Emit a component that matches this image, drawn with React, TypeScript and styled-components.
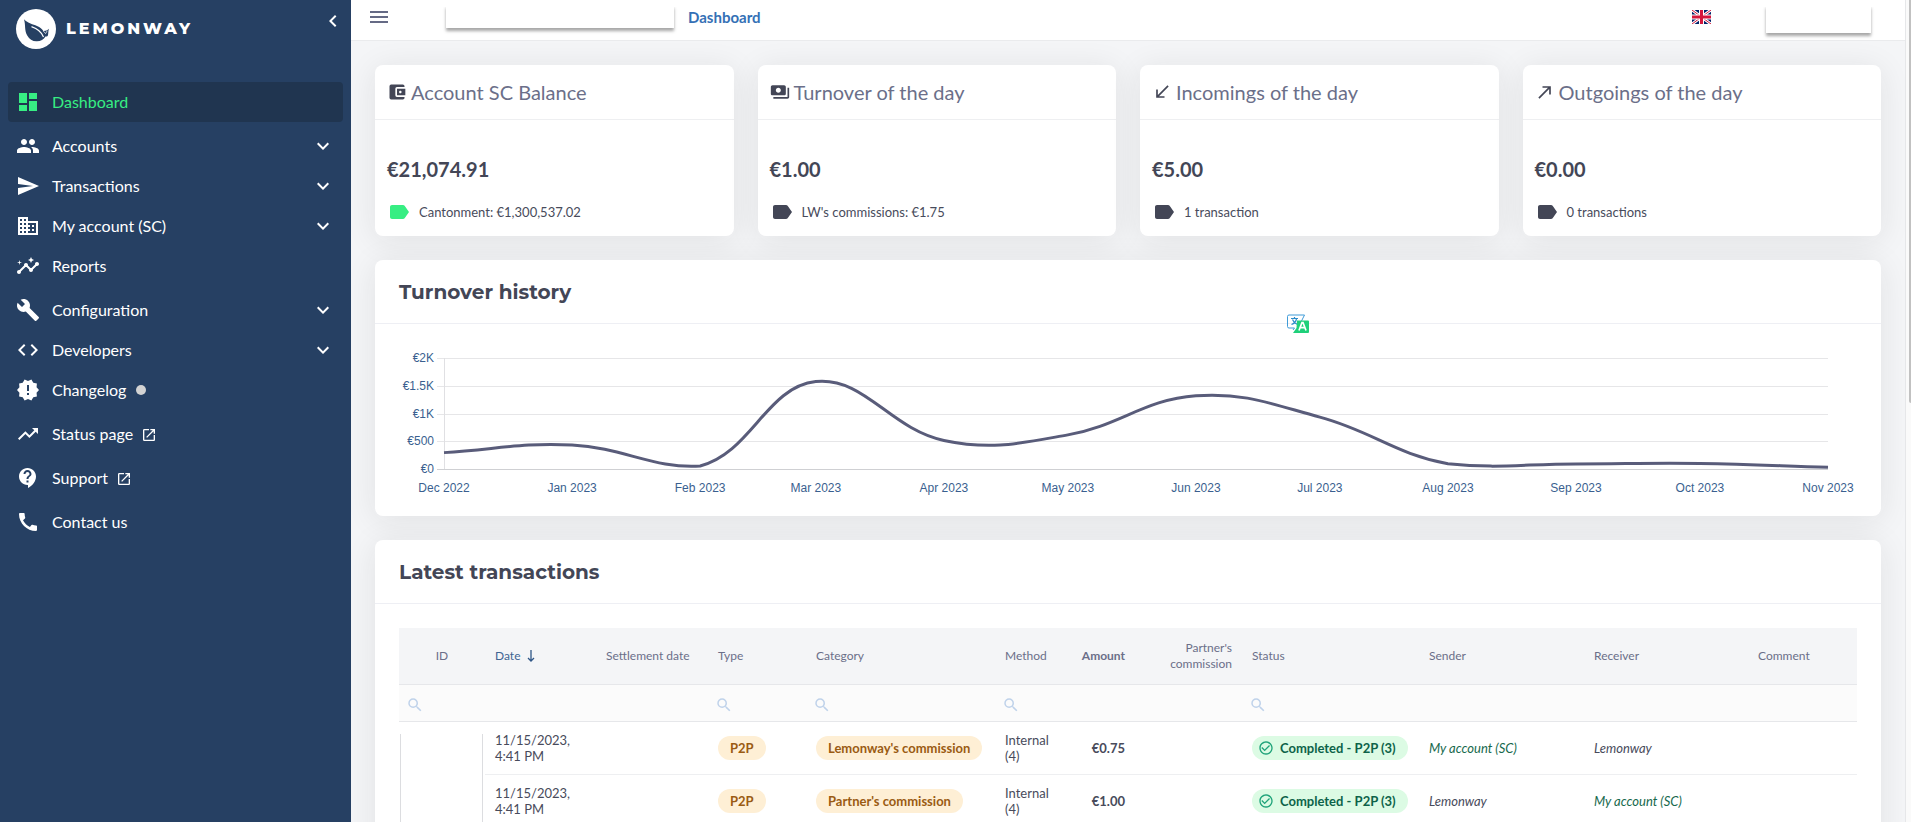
import React, { useEffect, useRef, useState } from 'react';
import styled, { createGlobalStyle } from 'styled-components';
import type { IconType } from 'react-icons';
import {
  MdAccountBalanceWallet,
  MdBuild,
  MdBusiness,
  MdCall,
  MdCallMade,
  MdCallReceived,
  MdCheckCircleOutline,
  MdChevronLeft,
  MdCode,
  MdContactSupport,
  MdDashboard,
  MdExpandMore,
  MdInsights,
  MdLabel,
  MdMenu,
  MdNewReleases,
  MdOpenInNew,
  MdPayments,
  MdPeople,
  MdSearch,
  MdSend,
  MdTrendingUp,
} from 'react-icons/md';

const GlobalStyle = createGlobalStyle`
  *, *::before, *::after { box-sizing: border-box; }
  body {
    margin: 0;
    font-family: Lato, "Liberation Sans", sans-serif;
    font-size: 14px;
    color: #484b5b;
    background: #f4f5f7;
  }
  h1, h2, p, ul { margin: 0; padding: 0; }
  button { font: inherit; color: inherit; background: none; border: 0; padding: 0; cursor: pointer; }
  a { color: inherit; text-decoration: none; }
  svg { display: block; flex: none; }
`;

const Shell = styled.div`
  display: flex;
  height: 100vh;
  overflow: hidden;
`;

/* ---------- Sidebar ---------- */

const Sidebar = styled.aside`
  flex: none;
  width: 351px;
  background: #264063;
  color: #fff;
`;

const Brand = styled.div`
  display: flex;
  align-items: flex-start;
  justify-content: space-between;
  height: 82px;
  padding: 9px 6px 0 16px;
`;

const BrandLink = styled.a`
  display: flex;
  align-items: center;
  gap: 10px;
`;

const Wordmark = styled.span`
  font: 800 16px/40px Montserrat, Inter, sans-serif;
  letter-spacing: 3px;
`;

const Nav = styled.nav`
  display: flex;
  flex-direction: column;
  gap: 4px;
  padding: 0 8px;
`;

const NavGroup = styled.ul`
  list-style: none;
`;

const NavLink = styled.a<{ $active?: boolean }>`
  display: flex;
  align-items: center;
  height: 40px;
  padding: 0 8px;
  border-radius: 4px;
  font-size: 16px;
  color: ${({ $active }) => ($active ? '#37ee83' : '#fff')};
  background: ${({ $active }) => ($active ? '#203550' : 'transparent')};
`;

const NavLabel = styled.span`
  margin: 0 0 2px 12px;
`;

const ExternalMark = styled.span`
  margin: 2px 0 0 8px;
`;

const Dot = styled.span`
  width: 10px;
  height: 10px;
  margin-left: 10px;
  border-radius: 50%;
  background: #d3d3d3;
`;

const Chevron = styled.span`
  margin-left: auto;
`;

type NavItem = {
  label: string;
  icon: IconType;
  active?: boolean;
  children?: boolean;
  external?: boolean;
  dot?: boolean;
};

const navGroups: NavItem[][] = [
  [{ label: 'Dashboard', icon: MdDashboard, active: true }],
  [
    { label: 'Accounts', icon: MdPeople, children: true },
    { label: 'Transactions', icon: MdSend, children: true },
    { label: 'My account (SC)', icon: MdBusiness, children: true },
    { label: 'Reports', icon: MdInsights },
  ],
  [
    { label: 'Configuration', icon: MdBuild, children: true },
    { label: 'Developers', icon: MdCode, children: true },
    { label: 'Changelog', icon: MdNewReleases, dot: true },
  ],
  [{ label: 'Status page', icon: MdTrendingUp, external: true }],
  [{ label: 'Support', icon: MdContactSupport, external: true }],
  [{ label: 'Contact us', icon: MdCall }],
];

const LeafLogo = () => (
  <svg width="40" height="40" viewBox="0 0 40 40" aria-hidden="true">
    <circle cx="20" cy="20" r="20" fill="#fff" />
    <path
      d="M8 10.300C12 14.500 17 15.200 21 17c3.200 1.300 5 2.800 6.300 4.900 2 .2 4-.6 5.700-2.200-1 2.300-.4 4.800-1.300 7.300-1 .6-1.600.7-2.300.5-1.600 3.200-5 5-9 4.800-4-.2-7.200-2-9-5.600C8.200 21.600 9.800 16 8 10.300z"
      fill="#264063"
    />
    <path d="M15.500 17.600c5.200 1.800 9.800 4.600 12 10.400" fill="none" stroke="#fff" strokeWidth="1.200" />
    <path d="M27.300 22l2.300 2.600 1.600-2.800" fill="none" stroke="#fff" strokeWidth=".7" />
  </svg>
);

/* ---------- Top bar ---------- */

const Page = styled.div`
  flex: 1;
  min-width: 0;
  display: flex;
  flex-direction: column;
`;

const TopBar = styled.header`
  flex: none;
  display: flex;
  align-items: flex-start;
  height: 41px;
  padding: 5px 34px 0 16px;
  background: #fff;
  border-bottom: 1px solid #eaebed;
`;

const MenuButton = styled.button`
  color: #656a85;
`;

const BlankPlate = styled.div<{ $width: number; $height: number }>`
  width: ${({ $width }) => $width}px;
  height: ${({ $height }) => $height}px;
  background: #fff;
  box-shadow: 0 3px 3px rgba(0, 0, 0, 0.35);
  clip-path: inset(2px -6px -8px -6px);
`;

const Crumbs = styled.nav`
  display: flex;
  flex: 1;
  margin-left: 55px;
`;

const Crumb = styled.a`
  margin-left: 14px;
  font-weight: 700;
  font-size: 15px;
  line-height: 24px;
  color: #3470b5;
`;

const LanguageButton = styled.button`
  margin: 5px 55px 0 0;
`;

const Flag = () => (
  <svg width="19" height="14" viewBox="0 0 19 14" aria-hidden="true">
    <rect width="19" height="14" fill="#012169" />
    <path d="M0 0l19 14M19 0L0 14" stroke="#fff" strokeWidth="3" />
    <path d="M0 0l19 14M19 0L0 14" stroke="#d4163c" strokeWidth="1" />
    <path d="M9.500 0v14M0 7h19" stroke="#fff" strokeWidth="5" />
    <path d="M9.500 0v14M0 7h19" stroke="#d4163c" strokeWidth="3" />
  </svg>
);

/* ---------- Content ---------- */

const Body = styled.div`
  flex: 1;
  min-height: 0;
  overflow: hidden;
`;

const Content = styled.main`
  display: flex;
  flex-direction: column;
  gap: 24px;
  padding: 24px;
`;

const ScrollTrack = styled.div`
  flex: none;
  width: 6px;
  padding-left: 3px;
  background: #fafafa;
  border-left: 1px solid #e6e7e9;
`;

const ScrollThumb = styled.div`
  height: 49%;
  background: #c1c1c1;
  border-radius: 0 0 0 2px;
`;

const StatRow = styled.section`
  display: grid;
  grid-template-columns: repeat(4, 1fr);
  gap: 24px;
`;

const Card = styled.section`
  background: #fff;
  border-radius: 8px;
  box-shadow: 0 4px 32px rgba(30, 32, 38, 0.09);
`;

const StatHead = styled.header`
  display: flex;
  align-items: center;
  gap: 4px;
  height: 55px;
  padding: 0 12px;
  border-bottom: 1px solid #eeeff1;
  color: #434656;
`;

const StatTitle = styled.h2`
  font-size: 20px;
  font-weight: 400;
  color: #6b6f89;
`;

const StatBody = styled.div`
  padding: 34px 12px 12px;
`;

const StatValue = styled.p`
  font-size: 20px;
  line-height: 30px;
  font-weight: 700;
  color: #434656;
`;

const StatNote = styled.p<{ $accent?: boolean }>`
  display: flex;
  align-items: center;
  gap: 8px;
  height: 24px;
  margin-top: 16px;
  font-size: 13px;
  color: #484b5b;

  svg {
    color: ${({ $accent }) => ($accent ? '#37ee83' : '#434656')};
  }
`;

const stats = [
  { title: 'Account SC Balance', icon: MdAccountBalanceWallet, value: '€21,074.91', note: 'Cantonment: €1,300,537.02', accent: true },
  { title: 'Turnover of the day', icon: MdPayments, value: '€1.00', note: "LW's commissions: €1.75" },
  { title: 'Incomings of the day', icon: MdCallReceived, value: '€5.00', note: '1 transaction' },
  { title: 'Outgoings of the day', icon: MdCallMade, value: '€0.00', note: '0 transactions' },
];

const PanelHead = styled.header`
  position: relative;
  display: flex;
  align-items: center;
  height: 64px;
  padding: 0 24px;
  border-bottom: 1px solid #eeeff4;
`;

const PanelTitle = styled.h2`
  font: 700 20px/30px Montserrat, Inter, sans-serif;
  color: #434656;
`;

const TranslateButton = styled.button`
  position: absolute;
  left: 912px;
  bottom: -10px;
`;

const TranslateIcon = () => (
  <svg width="22" height="19" viewBox="0 0 22 19" aria-hidden="true">
    <path d="M17.500 1H2a1.500 1.500 0 0 0-1.500 1.500v10A1.500 1.500 0 0 0 2 14h5.500l-1.500 2" fill="none" stroke="#3f9bd8" />
    <path d="M17.500 1l-3 6" stroke="#3f9bd8" />
    <path d="M4 4.500h7M7.500 3v1.500M9.500 5c-.6 2.500-2.500 4.500-5 5.500M5.500 5.500c.8 2 2.300 3.800 4.500 4.800" fill="none" stroke="#2b8bc9" strokeWidth="1.200" />
    <path d="M10 6.500h11a1 1 0 0 1 1 1V18a1 1 0 0 1-1 1H6l3.500-5z" fill="#1fd07a" />
    <path d="M12 16.500l3-8h1l3 8M13.300 13.600h4.400" fill="none" stroke="#fff" strokeWidth="1.700" />
  </svg>
);

/* ---------- Turnover chart ---------- */

const ChartBox = styled.div`
  padding: 24px 24px 16px;
`;

const AxisText = styled.text`
  font-family: "Liberation Sans", Arial, sans-serif;
  font-size: 12px;
  fill: #3a5f8f;
`;

const series = [
  { month: 'Dec 2022', day: 0, amount: 295 },
  { month: 'Jan 2023', day: 31, amount: 432 },
  { month: 'Feb 2023', day: 62, amount: 55 },
  { month: 'Mar 2023', day: 90, amount: 1575 },
  { month: 'Apr 2023', day: 121, amount: 515 },
  { month: 'May 2023', day: 151, amount: 615 },
  { month: 'Jun 2023', day: 182, amount: 1320 },
  { month: 'Jul 2023', day: 212, amount: 935 },
  { month: 'Aug 2023', day: 243, amount: 95 },
  { month: 'Sep 2023', day: 274, amount: 92 },
  { month: 'Oct 2023', day: 304, amount: 100 },
  { month: 'Nov 2023', day: 335, amount: 30 },
];

const ticks = [
  { label: '€2K', amount: 2000 },
  { label: '€1.5K', amount: 1500 },
  { label: '€1K', amount: 1000 },
  { label: '€500', amount: 500 },
  { label: '€0', amount: 0 },
];

type Point = { x: number; y: number };

/* Cubic spline whose handles follow the direction between neighbouring points
   and never reach below the zero line. */
function splinePath(points: Point[], tension: number, floor: number) {
  const handles = points.map((p, i) => {
    const prev = points[i - 1] ?? p;
    const next = points[i + 1] ?? p;
    const before = Math.hypot(p.x - prev.x, p.y - prev.y);
    const after = Math.hypot(next.x - p.x, next.y - p.y);
    const a = (tension * before) / (before + after);
    const b = (tension * after) / (before + after);
    return {
      inX: p.x - a * (next.x - prev.x),
      inY: Math.min(floor, p.y - a * (next.y - prev.y)),
      outX: p.x + b * (next.x - prev.x),
      outY: Math.min(floor, p.y + b * (next.y - prev.y)),
    };
  });
  return points
    .map((p, i) =>
      i === 0
        ? `M${p.x} ${p.y}`
        : `C${handles[i - 1].outX} ${handles[i - 1].outY} ${handles[i].inX} ${handles[i].inY} ${p.x} ${p.y}`,
    )
    .join('');
}

function TurnoverChart() {
  const box = useRef<HTMLDivElement>(null);
  const [width, setWidth] = useState(1458);

  useEffect(() => {
    const node = box.current;
    if (!node) return;
    const observer = new ResizeObserver(([entry]) => setWidth(entry.contentRect.width));
    observer.observe(node);
    return () => observer.disconnect();
  }, []);

  const left = 45;
  const right = width - 29;
  const top = 10;
  const bottom = 121;
  const xOf = (day: number) => left + (day / 335) * (right - left);
  const yOf = (amount: number) => bottom - (amount / 2000) * (bottom - top);
  const points = series.map((s) => ({ x: xOf(s.day), y: yOf(s.amount) }));

  return (
    <ChartBox>
      <div ref={box}>
        <svg width="100%" height="152" role="img" aria-label="Turnover history by month">
          {ticks.map((t) => {
            const y = Math.round(yOf(t.amount)) + 0.5;
            return (
              <g key={t.label}>
                <line x1={left - 7} x2={right} y1={y} y2={y} stroke={t.amount ? '#e6e6e8' : '#cfd0d3'} />
                <AxisText x={left - 10} y={y + 3} textAnchor="end">{t.label}</AxisText>
              </g>
            );
          })}
          <line x1={left + 0.5} x2={left + 0.5} y1={top} y2={bottom} stroke="#e0e0e3" />
          {series.map((s) => (
            <AxisText key={s.month} x={xOf(s.day)} y={144} textAnchor="middle">{s.month}</AxisText>
          ))}
          <path d={splinePath(points, 0.4, bottom)} fill="none" stroke="#595c7a" strokeWidth="3" />
        </svg>
      </div>
    </ChartBox>
  );
}

/* ---------- Transactions table ---------- */

const TableWrap = styled.div`
  padding: 24px;
`;

const Table = styled.table`
  width: 100%;
  table-layout: fixed;
  border-collapse: separate;
  border-spacing: 0;
`;

const HeadCell = styled.th<{ $align?: string; $bold?: boolean; $sorted?: boolean }>`
  height: 57px;
  padding: 0 10px;
  background: #f4f5f7;
  border-bottom: 1px solid #e6e7ea;
  font-size: 12px;
  line-height: 16px;
  font-weight: ${({ $bold }) => ($bold ? 700 : 400)};
  text-align: ${({ $align }) => $align ?? 'left'};
  color: ${({ $sorted }) => ($sorted ? '#3f6593' : '#6b6f89')};
`;

const SortButton = styled.button`
  display: inline-flex;
  align-items: center;
  gap: 7px;
`;

const FilterCell = styled.td`
  height: 37px;
  padding: 4px 7px 0;
  background: #fbfbfb;
  border-bottom: 1px solid #e6e7ea;
`;

const FilterLabel = styled.label`
  display: flex;
  align-items: center;
  color: #bfd2ea;
`;

const FilterInput = styled.input`
  min-width: 0;
  width: 100%;
  border: 0;
  outline: 0;
  background: transparent;
  font: inherit;
`;

const Cell = styled.td<{ $align?: string; $bold?: boolean }>`
  height: 53px;
  padding: 0 10px;
  border-bottom: 1px solid #eeeff1;
  font-size: 13px;
  line-height: 16px;
  font-weight: ${({ $bold }) => ($bold ? 700 : 400)};
  text-align: ${({ $align }) => $align ?? 'left'};
  color: #484b5b;
`;

const IdCell = styled.td`
  height: 106px;
  padding: 12px 2px 0 1px;
`;

const IdPlate = styled.div`
  height: 94px;
  border: 1px solid #dcdde0;
  border-width: 0 1px;
  background: #fff;
`;

const Party = styled.em<{ $own?: boolean }>`
  color: ${({ $own }) => ($own ? '#17694d' : '#484b5b')};
`;

const Pill = styled.span<{ $tone: 'amber' | 'green' }>`
  display: inline-flex;
  align-items: center;
  gap: 6px;
  height: 24px;
  padding: ${({ $tone }) => ($tone === 'amber' ? '0 12px' : '0 12px 0 6px')};
  border-radius: 12px;
  font-weight: 700;
  font-size: 13px;
  white-space: nowrap;
  vertical-align: middle;
  color: ${({ $tone }) => ($tone === 'amber' ? '#9a5b13' : '#0d6349')};
  background: ${({ $tone }) => ($tone === 'amber' ? '#feefd5' : '#dcfbe4')};

  svg {
    color: #1fa37a;
  }
`;

type Column = {
  label: string;
  width: number;
  align?: string;
  bold?: boolean;
  sorted?: boolean;
  filter?: boolean;
};

const columns: Column[] = [
  { label: 'ID', width: 86, align: 'center', filter: true },
  { label: 'Date', width: 111, sorted: true },
  { label: 'Settlement date', width: 112 },
  { label: 'Type', width: 98, filter: true },
  { label: 'Category', width: 189, filter: true },
  { label: 'Method', width: 75, filter: true },
  { label: 'Amount', width: 65, align: 'right', bold: true },
  { label: "Partner's commission", width: 107, align: 'right' },
  { label: 'Status', width: 177, filter: true },
  { label: 'Sender', width: 165 },
  { label: 'Receiver', width: 164 },
  { label: 'Comment', width: 109 },
];

const rows = [
  { category: "Lemonway's commission", amount: '€0.75', sender: 'My account (SC)', receiver: 'Lemonway' },
  { category: "Partner's commission", amount: '€1.00', sender: 'Lemonway', receiver: 'My account (SC)' },
];

const SortArrow = () => (
  <svg width="8" height="12" viewBox="0 0 8 12" aria-hidden="true">
    <path d="M4 0v11M1 8l3 3 3-3" fill="none" stroke="#2f5687" strokeWidth="1.300" />
  </svg>
);

function Transactions() {
  return (
    <TableWrap>
      <Table>
        <colgroup>
          {columns.map((c) => (
            <col key={c.label} width={c.width} />
          ))}
        </colgroup>
        <thead>
          <tr>
            {columns.map((c) => (
              <HeadCell key={c.label} scope="col" $align={c.align} $bold={c.bold} $sorted={c.sorted}>
                {c.sorted ? (
                  <SortButton type="button">
                    {c.label}
                    <SortArrow />
                  </SortButton>
                ) : (
                  c.label
                )}
              </HeadCell>
            ))}
          </tr>
          <tr>
            {columns.map((c) => (
              <FilterCell key={c.label}>
                {c.filter && (
                  <FilterLabel>
                    <MdSearch size={18} />
                    <FilterInput type="text" aria-label={`Filter by ${c.label}`} />
                  </FilterLabel>
                )}
              </FilterCell>
            ))}
          </tr>
        </thead>
        <tbody>
          {rows.map((r, i) => (
            <tr key={r.category}>
              {i === 0 && (
                <IdCell rowSpan={rows.length}>
                  <IdPlate />
                </IdCell>
              )}
              <Cell>11/15/2023, 4:41 PM</Cell>
              <Cell />
              <Cell>
                <Pill $tone="amber">P2P</Pill>
              </Cell>
              <Cell>
                <Pill $tone="amber">{r.category}</Pill>
              </Cell>
              <Cell>Internal (4)</Cell>
              <Cell $align="right" $bold>{r.amount}</Cell>
              <Cell />
              <Cell>
                <Pill $tone="green">
                  <MdCheckCircleOutline size={16} />
                  Completed - P2P (3)
                </Pill>
              </Cell>
              <Cell>
                <Party $own={r.sender !== 'Lemonway'}>{r.sender}</Party>
              </Cell>
              <Cell>
                <Party $own={r.receiver !== 'Lemonway'}>{r.receiver}</Party>
              </Cell>
              <Cell />
            </tr>
          ))}
        </tbody>
      </Table>
    </TableWrap>
  );
}

export default function App() {
  return (
    <>
      <GlobalStyle />
      <Shell>
        <Sidebar>
          <Brand>
            <BrandLink href="#">
              <LeafLogo />
              <Wordmark>LEMONWAY</Wordmark>
            </BrandLink>
            <button type="button" aria-label="Collapse menu">
              <MdChevronLeft size={24} />
            </button>
          </Brand>
          <Nav>
            {navGroups.map((group) => (
              <NavGroup key={group[0].label}>
                {group.map(({ label, icon: Icon, active, children, external, dot }) => (
                  <li key={label}>
                    <NavLink href="#" $active={active}>
                      <Icon size={24} />
                      <NavLabel>{label}</NavLabel>
                      {external && (
                        <ExternalMark>
                          <MdOpenInNew size={16} />
                        </ExternalMark>
                      )}
                      {dot && <Dot />}
                      {children && (
                        <Chevron>
                          <MdExpandMore size={24} />
                        </Chevron>
                      )}
                    </NavLink>
                  </li>
                ))}
              </NavGroup>
            ))}
          </Nav>
        </Sidebar>
        <Page>
          <TopBar>
            <MenuButton type="button" aria-label="Toggle menu">
              <MdMenu size={24} />
            </MenuButton>
            <Crumbs aria-label="Breadcrumb">
              <BlankPlate $width={228} $height={23} />
              <Crumb href="#">Dashboard</Crumb>
            </Crumbs>
            <LanguageButton type="button" aria-label="Language: English">
              <Flag />
            </LanguageButton>
            <BlankPlate $width={105} $height={28} />
          </TopBar>
          <Body>
            <Content>
              <StatRow>
                {stats.map(({ title, icon: Icon, value, note, accent }) => (
                  <Card key={title}>
                    <StatHead>
                      <Icon size={20} />
                      <StatTitle>{title}</StatTitle>
                    </StatHead>
                    <StatBody>
                      <StatValue>{value}</StatValue>
                      <StatNote $accent={accent}>
                        <MdLabel size={24} />
                        {note}
                      </StatNote>
                    </StatBody>
                  </Card>
                ))}
              </StatRow>
              <Card>
                <PanelHead>
                  <PanelTitle>Turnover history</PanelTitle>
                  <TranslateButton type="button" aria-label="Translate">
                    <TranslateIcon />
                  </TranslateButton>
                </PanelHead>
                <TurnoverChart />
              </Card>
              <Card>
                <PanelHead>
                  <PanelTitle>Latest transactions</PanelTitle>
                </PanelHead>
                <Transactions />
              </Card>
            </Content>
          </Body>
        </Page>
        <ScrollTrack>
          <ScrollThumb />
        </ScrollTrack>
      </Shell>
    </>
  );
}
